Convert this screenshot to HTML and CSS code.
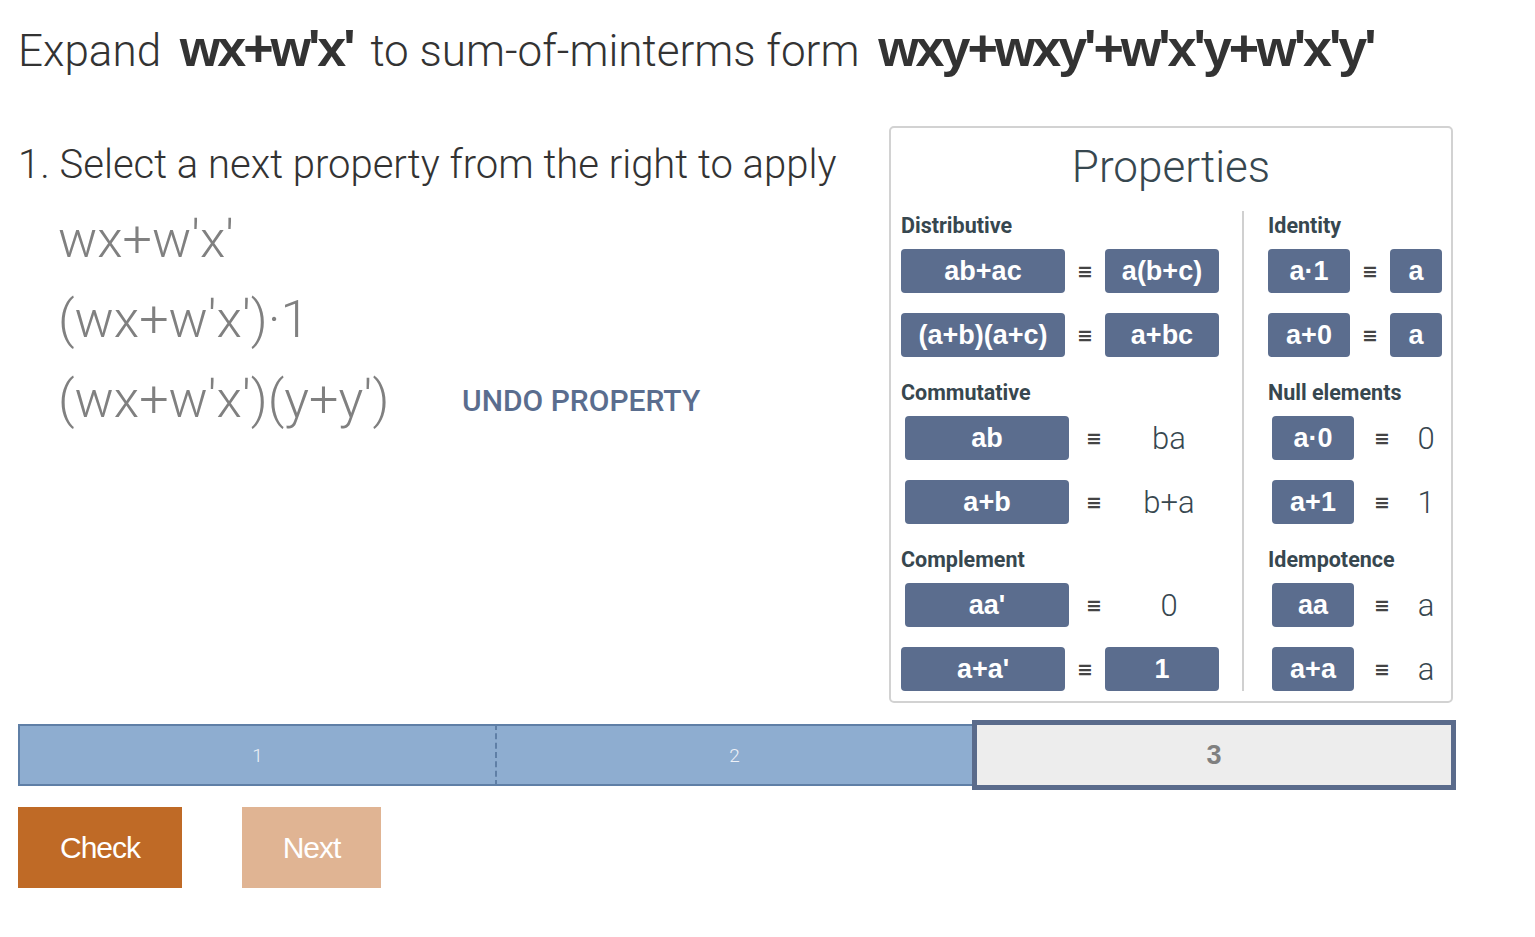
FILE: index.html
```html
<!DOCTYPE html>
<html lang="en">
<head>
    <meta charset="UTF-8">
    <meta name="viewport" content="width=device-width, initial-scale=1.0">
    <title>Sum-of-minterms</title>
    <link rel="stylesheet" href="styles.css">
</head>
<body>
    <div class="page">
        <h1 class="task">Expand <b class="expr">wx+w'x'</b> to sum-of-minterms form <b class="expr">wxy+wxy'+w'x'y+w'x'y'</b></h1>

        <div class="work">
            <div class="steps">
                <p class="instruction">1. Select a next property from the right to apply</p>
                <div class="derivation">
                    <div class="line">wx+w'x'</div>
                    <div class="line">(wx+w'x')·1</div>
                    <div class="line">(wx+w'x')(y+y') <a class="undo" href="#">UNDO PROPERTY</a></div>
                </div>
            </div>

            <div class="props">
                <h2>Properties</h2>
                <div class="props-cols">
                    <div class="col col-left">
                        <div class="group">
                            <h3>Distributive</h3>
                            <div class="row pair"><span class="prop">ab+ac</span><span class="eq">≡</span><span class="prop">a(b+c)</span></div>
                            <div class="row pair"><span class="prop">(a+b)(a+c)</span><span class="eq">≡</span><span class="prop">a+bc</span></div>
                        </div>
                        <div class="group">
                            <h3>Commutative</h3>
                            <div class="row plain"><span class="prop">ab</span><span class="eq">≡</span><span class="result">ba</span></div>
                            <div class="row plain"><span class="prop">a+b</span><span class="eq">≡</span><span class="result">b+a</span></div>
                        </div>
                        <div class="group">
                            <h3>Complement</h3>
                            <div class="row plain"><span class="prop">aa'</span><span class="eq">≡</span><span class="result">0</span></div>
                            <div class="row pair"><span class="prop">a+a'</span><span class="eq">≡</span><span class="prop">1</span></div>
                        </div>
                    </div>
                    <div class="col col-right">
                        <div class="group">
                            <h3>Identity</h3>
                            <div class="row pair"><span class="prop">a·1</span><span class="eq">≡</span><span class="prop">a</span></div>
                            <div class="row pair"><span class="prop">a+0</span><span class="eq">≡</span><span class="prop">a</span></div>
                        </div>
                        <div class="group">
                            <h3>Null elements</h3>
                            <div class="row plain"><span class="prop">a·0</span><span class="eq">≡</span><span class="result">0</span></div>
                            <div class="row plain"><span class="prop">a+1</span><span class="eq">≡</span><span class="result">1</span></div>
                        </div>
                        <div class="group">
                            <h3>Idempotence</h3>
                            <div class="row plain"><span class="prop">aa</span><span class="eq">≡</span><span class="result">a</span></div>
                            <div class="row plain"><span class="prop">a+a</span><span class="eq">≡</span><span class="result">a</span></div>
                        </div>
                    </div>
                </div>
            </div>
        </div>

        <div class="progress">
            <div class="seg done first">1</div>
            <div class="seg done">2</div>
            <div class="seg current">3</div>
        </div>

        <div class="actions">
            <button class="btn check">Check</button>
            <button class="btn next">Next</button>
        </div>
    </div>
</body>
</html>
```

FILE: styles.css
```css
body {
    margin: 0;
    background: white;
    font-family: Roboto, "Liberation Sans", sans-serif;
    color: #333;
}
.page {
    width: 1438px;
    padding: 0 18px;
}
.task {
    margin: 0;
    padding-top: 18px;
    font-size: 44px;
    font-weight: 300;
    line-height: 60px;
    white-space: nowrap;
}
.expr {
    font-family: "Liberation Sans", Arial, sans-serif;
    font-weight: bold;
    font-size: 52px;
    letter-spacing: -3px;
    margin: 0 7px 0 8px;
}
.work {
    display: flex;
    margin-top: 45px;
}
.steps {
    flex: 1;
    padding-top: 15px;
}
.instruction {
    margin: 0;
    font-size: 40px;
    font-weight: 300;
    line-height: 48px;
}
.derivation {
    margin-top: 11px;
    padding-left: 40px;
}
.line {
    font-size: 52px;
    font-weight: 300;
    line-height: 80px;
    color: #808080;
    white-space: nowrap;
}
.undo {
    margin-left: 60px;
    vertical-align: 6px;
    font-size: 30px;
    font-weight: 500;
    color: #5a6d8e;
    text-decoration: none;
}
.props {
    width: 540px;
    margin-right: 3px;
    padding: 13px 10px 10px;
    border: 2px solid #d2d2d2;
    border-radius: 5px;
}
.props h2 {
    margin: 0;
    text-align: center;
    font-size: 44px;
    font-weight: 300;
    line-height: 52px;
    color: #37474f;
}
.props-cols {
    display: flex;
    margin-top: 18px;
}
.col {
    padding-top: 3px;
}
.col-left {
    width: 318px;
    padding-right: 23px;
    border-right: 2px solid #d0d0d0;
}
.col-right {
    padding-left: 24px;
    width: 174px;
}
.group + .group {
    margin-top: 24px;
}
.group h3 {
    margin: 0 0 11px;
    font-size: 21.5px;
    font-weight: bold;
    line-height: 24px;
    color: #37474f;
}
.row {
    display: grid;
    align-items: center;
    height: 44px;
}
.row + .row {
    margin-top: 20px;
}
.col-left .pair {
    grid-template-columns: 164px 40px 114px;
}
.col-left .plain {
    grid-template-columns: 164px 50px 100px;
    padding-left: 4px;
}
.col-right .pair {
    grid-template-columns: 82px 40px 52px;
}
.col-right .plain {
    grid-template-columns: 82px 56px 1fr;
    padding-left: 4px;
}
.prop {
    display: flex;
    align-items: center;
    justify-content: center;
    height: 44px;
    background: #5b6d8e;
    border-radius: 4px;
    color: white;
    font-family: "Liberation Sans", Arial, sans-serif;
    font-weight: bold;
    font-size: 27px;
}
.eq {
    text-align: center;
    font-family: "DejaVu Sans", sans-serif;
    font-size: 19px;
    font-weight: bold;
    color: #444;
}
.result {
    text-align: center;
    font-size: 31px;
    font-weight: 300;
    color: #37474f;
}
.progress {
    display: flex;
    align-items: center;
    margin-top: 17px;
    height: 70px;
}
.seg {
    display: flex;
    align-items: center;
    justify-content: center;
    box-sizing: border-box;
    font-size: 19px;
    font-weight: 300;
}
.seg.done {
    height: 62px;
    background: #8eadd0;
    border-top: 2px solid #5f7fa6;
    border-bottom: 2px solid #5f7fa6;
    color: #eef2f8;
}
.seg.first {
    width: 479px;
    border-left: 2px solid #5f7fa6;
    border-right: 2px dashed #5f7fa6;
}
.seg.done + .seg.done {
    width: 475px;
}
.seg.current {
    flex: 1;
    height: 70px;
    background: #ededed;
    border: 5px solid #5a6b8b;
    color: #808080;
    font-family: "Liberation Sans", Arial, sans-serif;
    font-weight: bold;
    font-size: 27px;
}
.actions {
    display: flex;
    gap: 60px;
    margin-top: 17px;
}
.btn {
    height: 81px;
    border: none;
    color: white;
    font-family: "Liberation Sans", Arial, sans-serif;
    font-size: 30px;
    letter-spacing: -1px;
    cursor: pointer;
}
.check {
    width: 164px;
    background: #bf6a26;
}
.next {
    width: 139px;
    background: #e0b493;
}
```
